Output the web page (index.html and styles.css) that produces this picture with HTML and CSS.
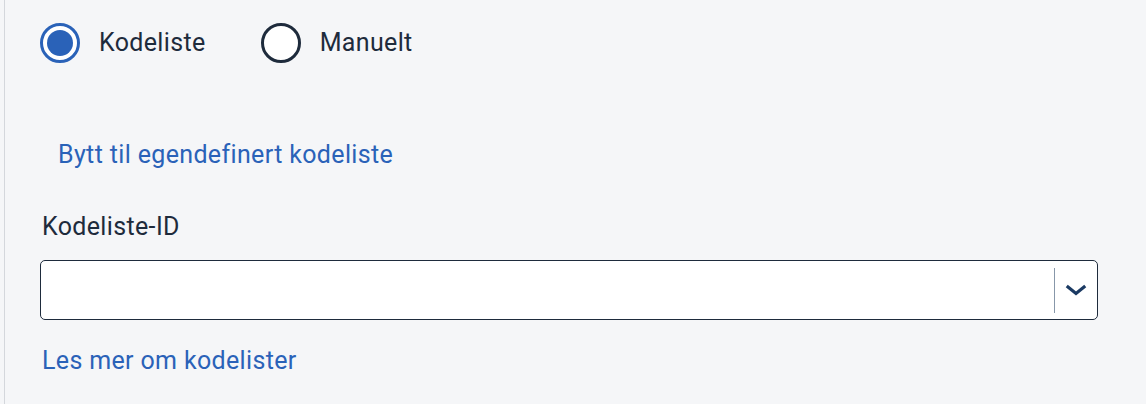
FILE: index.html
```html
<!DOCTYPE html>
<html lang="no">
<head>
<meta charset="utf-8">
<link rel="stylesheet" href="styles.css">
</head>
<body>
<div class="panel">
  <div class="radios">
    <label class="radio">
      <span class="radio-circle checked"><span class="dot"></span></span>
      <span class="radio-label">Kodeliste</span>
    </label>
    <label class="radio">
      <span class="radio-circle"></span>
      <span class="radio-label">Manuelt</span>
    </label>
  </div>
  <button class="link-button">Bytt til egendefinert kodeliste</button>
  <div class="field">
    <div class="field-label">Kodeliste-ID</div>
    <div class="select">
      <div class="select-value"></div>
      <div class="select-sep"></div>
      <div class="select-arrow">
        <svg width="22" height="14" viewBox="0 0 22 14"><path d="M3 4 L11 10.5 L19 4" fill="none" stroke="#1b3a63" stroke-width="3.2" stroke-linecap="square"/></svg>
      </div>
    </div>
  </div>
  <a class="link" href="#">Les mer om kodelister</a>
</div>
</body>
</html>
```

FILE: styles.css
```css
html, body {
  margin: 0;
  padding: 0;
  background: #f5f6f8;
}
body {
  font-family: Roboto, "Liberation Sans", sans-serif;
  color: #1e2b3c;
  letter-spacing: 0.35px;
}
.panel {
  margin-left: 4px;
  border-left: 1px solid #d4d7dc;
  min-height: 404px;
  box-sizing: border-box;
  padding: 23px 48px 0 35px;
}
.radios {
  display: flex;
  align-items: center;
  gap: 55px;
}
.radio {
  display: flex;
  align-items: center;
  gap: 19px;
}
.radio-circle {
  width: 40px;
  height: 40px;
  box-sizing: border-box;
  border: 3px solid #1e2b3c;
  border-radius: 50%;
  background: #fff;
  display: flex;
  align-items: center;
  justify-content: center;
}
.radio-circle.checked {
  border-color: #2a62b8;
}
.dot {
  width: 26px;
  height: 26px;
  border-radius: 50%;
  background: #2a62b8;
}
.radio-label {
  font-size: 25px;
  line-height: 40px;
}
.link-button {
  display: block;
  margin-top: 72px;
  padding: 0 18px;
  border: none;
  background: none;
  font-family: inherit;
  letter-spacing: inherit;
  font-size: 25px;
  line-height: 40px;
  color: #2a62b8;
}
.field {
  margin-top: 38px;
}
.field-label {
  font-size: 25px;
  line-height: 28px;
  padding-left: 2px;
}
.select {
  margin-top: 19px;
  height: 60px;
  box-sizing: border-box;
  border: 1px solid #1e2b3c;
  border-radius: 5px;
  background: #fff;
  display: flex;
  align-items: center;
}
.select-value {
  flex: 1;
}
.select-sep {
  width: 1px;
  height: 45px;
  background: #8797a9;
}
.select-arrow {
  width: 42px;
  display: flex;
  justify-content: center;
}
.link {
  display: inline-block;
  margin-top: 21px;
  margin-left: 2px;
  font-size: 25px;
  line-height: 40px;
  color: #2a62b8;
  text-decoration: none;
}
```
